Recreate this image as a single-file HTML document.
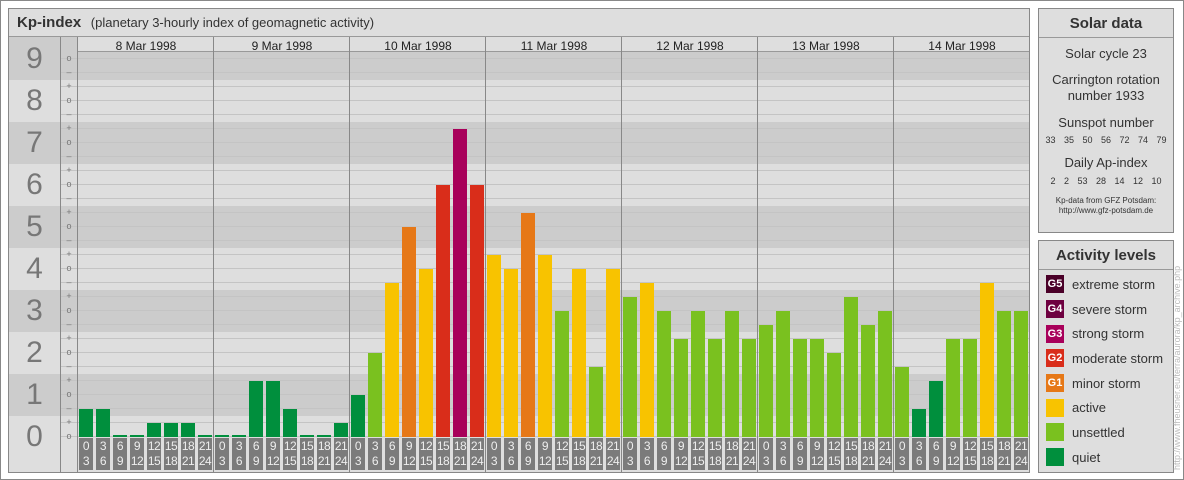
<!DOCTYPE html>
<html><head><meta charset="utf-8"><style>
*{margin:0;padding:0;box-sizing:border-box}
body{width:1184px;height:480px;background:#fff;font-family:"Liberation Sans",sans-serif;position:relative;overflow:hidden}
.a{position:absolute}
#frame{left:0;top:0;width:1184px;height:480px;border:1px solid #888}
#main{left:8px;top:8px;width:1022px;height:465px;border:1px solid #888;background:#dedede;overflow:hidden}
#title{left:0;top:0;width:1020px;height:28px;border-bottom:1px solid #999;font-size:13px;color:#333;line-height:27px;padding-left:8px}
#title b{font-size:15px;margin-right:6px}
.band{position:absolute;left:0;width:1020px;height:42px;background:#cccccc}
.num{position:absolute;left:0;width:51px;height:42px;line-height:42px;text-align:center;font-size:30px;color:#777}
#lines{left:51px;top:36px;width:969px;height:392px;background:repeating-linear-gradient(to bottom,transparent 0,transparent 13px,#c4c4c4 13px,#c4c4c4 14px)}
#signs{left:52px;top:42px;width:16px;font-size:9px;color:#777;text-align:center}
#signs div{height:14px;line-height:14px}
.vl{position:absolute;top:28px;width:1px;height:436px;background:#888}
#hdr{left:69px;top:28px;width:952px;height:15px;border-bottom:1px solid #999;background:#dedede}
#hdr span{display:inline-block;width:136px;text-align:center;font-size:12px;line-height:14px;color:#222}
#bars{left:70px;top:42px;height:386px;width:952px;display:flex;align-items:flex-end}
#bars i{display:block;width:14px;margin-right:3px}
.q{background:#008f3d}.u{background:#7ac11f}.y{background:#f8c300}.o{background:#e67817}.r{background:#d92d1a}.m{background:#a8005a}
#labs{left:70px;top:429px;display:flex}
#labs div{width:14px;height:32px;margin-right:3px;background:#7b7b7b;color:#eee;font-size:12px;line-height:15px;text-align:center;padding-top:1px;letter-spacing:-0.5px}
.panel{position:absolute;left:1038px;width:136px;border:1px solid #888;background:#dedede;color:#333;text-align:center}
.ph{height:29px;border-bottom:1px solid #999;font-size:15px;font-weight:bold;line-height:29px}
.sm{font-size:9px;word-spacing:6px}
.leg{display:flex;align-items:center;height:24.7px;padding-left:7px;font-size:13px}
.leg span.s{width:18px;height:18px;color:#fff;font-size:11px;font-weight:bold;line-height:18px;margin-right:8px;text-align:center}
#vert{left:1172px;top:470px;transform-origin:0 0;transform:rotate(-90deg);font-size:9px;color:#bbb;white-space:nowrap;width:240px}
</style></head><body>
<div class="a" id="frame"></div>
<div class="a" id="main">
<div class="a" id="title"><b>Kp-index</b> (planetary 3-hourly index of geomagnetic activity)</div>
<div class="band" style="top:28px;height:43px"></div>
<div class="band" style="top:113px"></div>
<div class="band" style="top:197px"></div>
<div class="band" style="top:281px"></div>
<div class="band" style="top:365px"></div>
<div class="a" id="lines"></div>
<div class="num" style="top:29px">9</div>
<div class="num" style="top:71px">8</div>
<div class="num" style="top:113px">7</div>
<div class="num" style="top:155px">6</div>
<div class="num" style="top:197px">5</div>
<div class="num" style="top:239px">4</div>
<div class="num" style="top:281px">3</div>
<div class="num" style="top:323px">2</div>
<div class="num" style="top:365px">1</div>
<div class="num" style="top:407px">0</div>
<div class="a" id="signs"><div>o</div><div>–</div><div>+</div><div>o</div><div>–</div><div>+</div><div>o</div><div>–</div><div>+</div><div>o</div><div>–</div><div>+</div><div>o</div><div>–</div><div>+</div><div>o</div><div>–</div><div>+</div><div>o</div><div>–</div><div>+</div><div>o</div><div>–</div><div>+</div><div>o</div><div>–</div><div>+</div><div>o</div></div>
<div class="a" id="hdr"><span>8 Mar 1998</span><span>9 Mar 1998</span><span>10 Mar 1998</span><span>11 Mar 1998</span><span>12 Mar 1998</span><span>13 Mar 1998</span><span>14 Mar 1998</span></div>
<div class="vl" style="left:51px"></div><div class="vl" style="left:68px"></div>
<div class="vl" style="left:204px"></div><div class="vl" style="left:340px"></div><div class="vl" style="left:476px"></div><div class="vl" style="left:612px"></div><div class="vl" style="left:748px"></div><div class="vl" style="left:884px"></div>
<div class="a" id="bars">
<i class="q" style="height:28px"></i><i class="q" style="height:28px"></i><i class="q" style="height:2px"></i><i class="q" style="height:2px"></i><i class="q" style="height:14px"></i><i class="q" style="height:14px"></i><i class="q" style="height:14px"></i><i class="q" style="height:2px"></i>
<i class="q" style="height:2px"></i><i class="q" style="height:2px"></i><i class="q" style="height:56px"></i><i class="q" style="height:56px"></i><i class="q" style="height:28px"></i><i class="q" style="height:2px"></i><i class="q" style="height:2px"></i><i class="q" style="height:14px"></i>
<i class="q" style="height:42px"></i><i class="u" style="height:84px"></i><i class="y" style="height:154px"></i><i class="o" style="height:210px"></i><i class="y" style="height:168px"></i><i class="r" style="height:252px"></i><i class="m" style="height:308px"></i><i class="r" style="height:252px"></i>
<i class="y" style="height:182px"></i><i class="y" style="height:168px"></i><i class="o" style="height:224px"></i><i class="y" style="height:182px"></i><i class="u" style="height:126px"></i><i class="y" style="height:168px"></i><i class="u" style="height:70px"></i><i class="y" style="height:168px"></i>
<i class="u" style="height:140px"></i><i class="y" style="height:154px"></i><i class="u" style="height:126px"></i><i class="u" style="height:98px"></i><i class="u" style="height:126px"></i><i class="u" style="height:98px"></i><i class="u" style="height:126px"></i><i class="u" style="height:98px"></i>
<i class="u" style="height:112px"></i><i class="u" style="height:126px"></i><i class="u" style="height:98px"></i><i class="u" style="height:98px"></i><i class="u" style="height:84px"></i><i class="u" style="height:140px"></i><i class="u" style="height:112px"></i><i class="u" style="height:126px"></i>
<i class="u" style="height:70px"></i><i class="q" style="height:28px"></i><i class="q" style="height:56px"></i><i class="u" style="height:98px"></i><i class="u" style="height:98px"></i><i class="y" style="height:154px"></i><i class="u" style="height:126px"></i><i class="u" style="height:126px"></i>
</div>
<div class="a" id="labs">
<div>0<br>3</div><div>3<br>6</div><div>6<br>9</div><div>9<br>12</div><div>12<br>15</div><div>15<br>18</div><div>18<br>21</div><div>21<br>24</div>
<div>0<br>3</div><div>3<br>6</div><div>6<br>9</div><div>9<br>12</div><div>12<br>15</div><div>15<br>18</div><div>18<br>21</div><div>21<br>24</div>
<div>0<br>3</div><div>3<br>6</div><div>6<br>9</div><div>9<br>12</div><div>12<br>15</div><div>15<br>18</div><div>18<br>21</div><div>21<br>24</div>
<div>0<br>3</div><div>3<br>6</div><div>6<br>9</div><div>9<br>12</div><div>12<br>15</div><div>15<br>18</div><div>18<br>21</div><div>21<br>24</div>
<div>0<br>3</div><div>3<br>6</div><div>6<br>9</div><div>9<br>12</div><div>12<br>15</div><div>15<br>18</div><div>18<br>21</div><div>21<br>24</div>
<div>0<br>3</div><div>3<br>6</div><div>6<br>9</div><div>9<br>12</div><div>12<br>15</div><div>15<br>18</div><div>18<br>21</div><div>21<br>24</div>
<div>0<br>3</div><div>3<br>6</div><div>6<br>9</div><div>9<br>12</div><div>12<br>15</div><div>15<br>18</div><div>18<br>21</div><div>21<br>24</div>
</div>
</div>
<div class="panel" style="top:8px;height:225px">
<div class="ph">Solar data</div>
<div style="font-size:13px;margin-top:8px">Solar cycle 23</div>
<div style="font-size:13px;margin-top:11px;line-height:16px">Carrington rotation<br>number 1933</div>
<div style="font-size:13px;margin-top:11px">Sunspot number</div>
<div class="sm" style="margin-top:5px">33 35 50 56 72 74 79</div>
<div style="font-size:13px;margin-top:10px">Daily Ap-index</div>
<div class="sm" style="margin-top:6px">2 2 53 28 14 12 10</div>
<div style="font-size:8px;margin-top:10px;line-height:10px">Kp-data from GFZ Potsdam:<br>http://www.gfz-potsdam.de</div>
</div>
<div class="panel" style="top:240px;height:233px;text-align:left">
<div class="ph" style="text-align:center">Activity levels</div>
<div style="padding-top:2px">
<div class="leg"><span class="s" style="background:#4a0028">G5</span>extreme storm</div>
<div class="leg"><span class="s" style="background:#6e0040">G4</span>severe storm</div>
<div class="leg"><span class="s" style="background:#a8005a">G3</span>strong storm</div>
<div class="leg"><span class="s" style="background:#d92d1a">G2</span>moderate storm</div>
<div class="leg"><span class="s" style="background:#e67817">G1</span>minor storm</div>
<div class="leg"><span class="s" style="background:#f8c300"></span>active</div>
<div class="leg"><span class="s" style="background:#7ac11f"></span>unsettled</div>
<div class="leg"><span class="s" style="background:#008f3d"></span>quiet</div>
</div>
</div>
<div class="a" id="vert">http://www.fheusner.eu/terra/aurora/kp_archive.php</div>
</body></html>
